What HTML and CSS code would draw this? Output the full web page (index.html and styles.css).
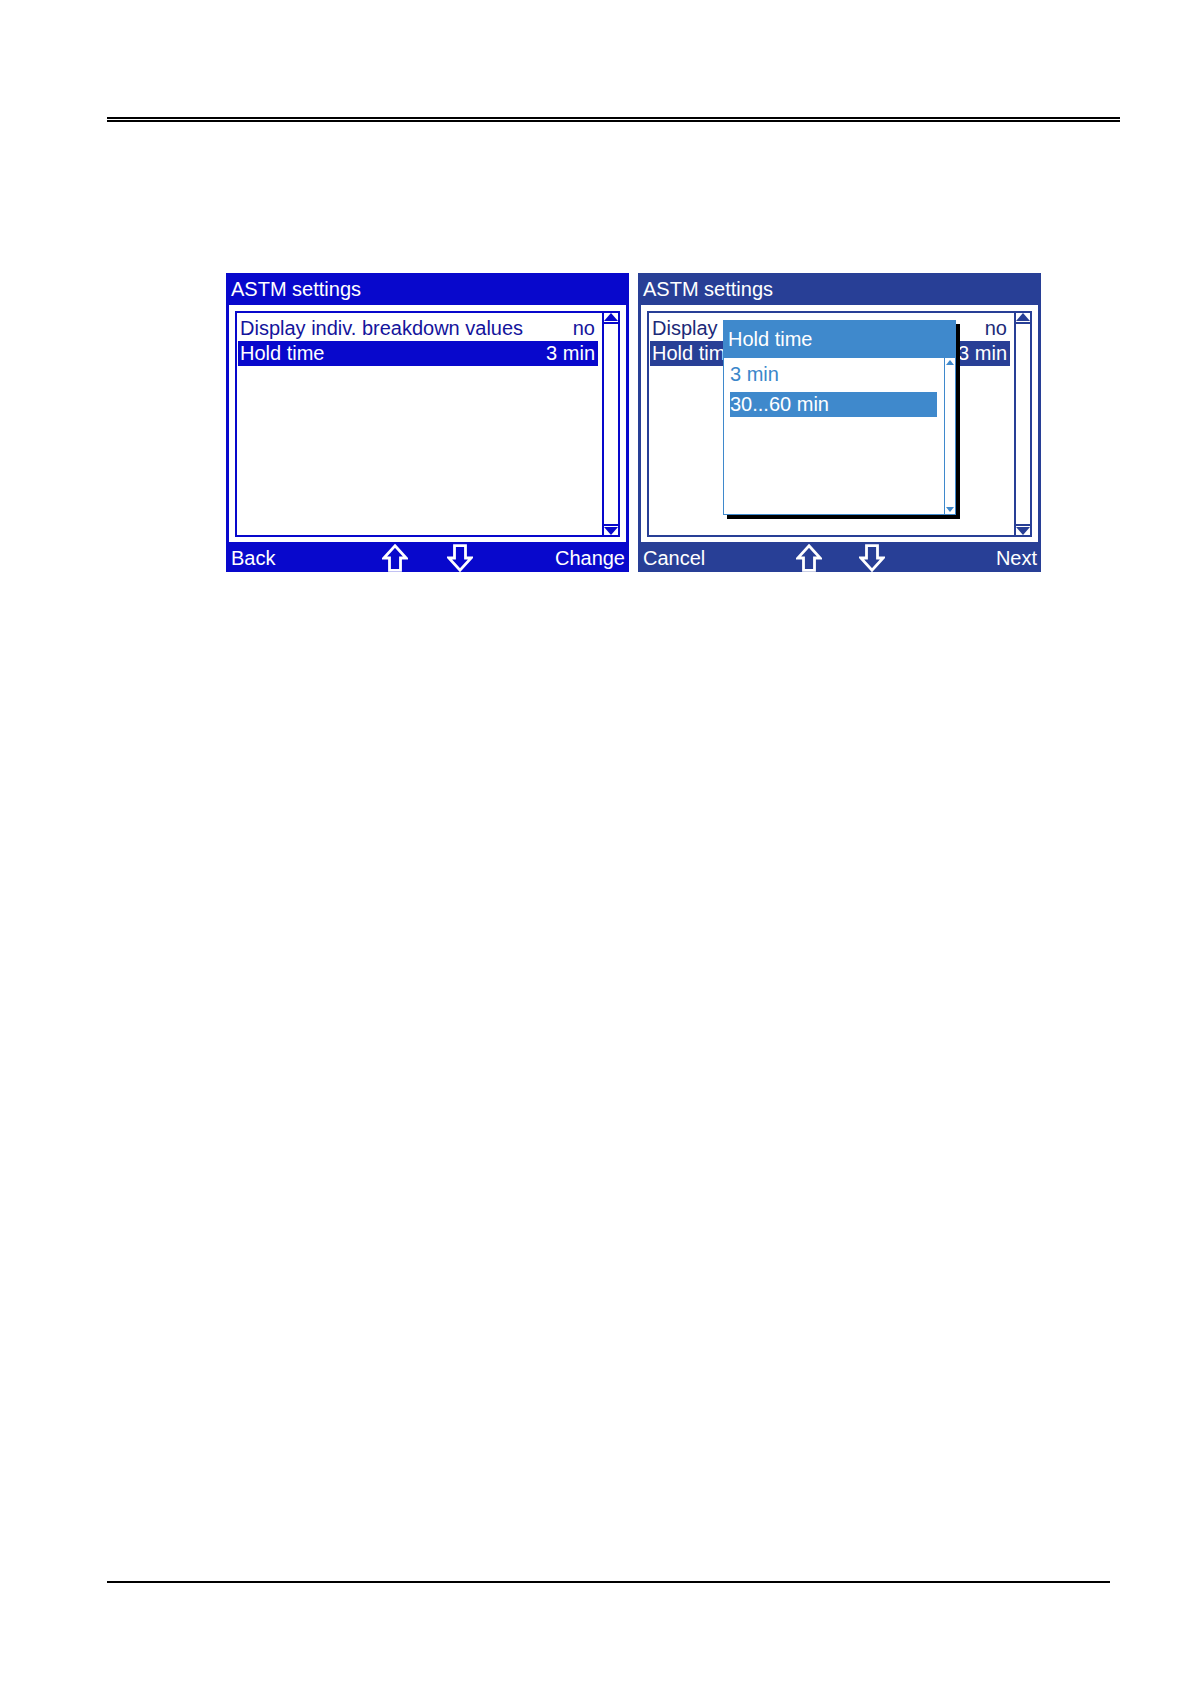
FILE: index.html
```html
<!DOCTYPE html>
<html>
<head>
<meta charset="utf-8">
<link rel="stylesheet" href="styles.css">
</head>
<body>
<div class="page">
  <div class="rule-top"></div>
  <div class="screens">
    <div class="screen s1">
      <div class="title">ASTM settings</div>
      <div class="panel">
        <div class="listbox">
          <div class="rows">
            <div class="row"><span>Display indiv. breakdown values</span><span>no</span></div>
            <div class="row sel"><span>Hold time</span><span>3 min</span></div>
          </div>
          <div class="scroll">
            <div class="sb-up"><svg width="14" height="8" viewBox="0 0 14 8"><polygon points="7,0 14,8 0,8"/></svg></div>
            <div class="sb-track"></div>
            <div class="sb-down"><svg width="14" height="8" viewBox="0 0 14 8"><polygon points="0,0 14,0 7,8"/></svg></div>
          </div>
        </div>
      </div>
      <div class="footer">
        <span class="f-left">Back</span>
        <svg class="arrow" width="26" height="28" viewBox="0 0 26 28"><path d="M13,1.8 L24.2,14 L18.5,14 L18.5,26.3 L7.5,26.3 L7.5,14 L1.8,14 Z"/></svg>
        <svg class="arrow down" width="26" height="28" viewBox="0 0 26 28"><path d="M7.5,1.7 L18.5,1.7 L18.5,14 L24.2,14 L13,26.2 L1.8,14 L7.5,14 Z"/></svg>
        <span class="f-right">Change</span>
      </div>
    </div>
    <div class="screen s2">
      <div class="title">ASTM settings</div>
      <div class="panel">
        <div class="listbox">
          <div class="rows">
            <div class="row"><span>Display indiv. breakdown values</span><span>no</span></div>
            <div class="row sel"><span>Hold time</span><span>3 min</span></div>
          </div>
          <div class="scroll">
            <div class="sb-up"><svg width="14" height="8" viewBox="0 0 14 8"><polygon points="7,0 14,8 0,8"/></svg></div>
            <div class="sb-track"></div>
            <div class="sb-down"><svg width="14" height="8" viewBox="0 0 14 8"><polygon points="0,0 14,0 7,8"/></svg></div>
          </div>
        </div>
      </div>
      <div class="footer">
        <span class="f-left">Cancel</span>
        <svg class="arrow" width="26" height="28" viewBox="0 0 26 28"><path d="M13,1.8 L24.2,14 L18.5,14 L18.5,26.3 L7.5,26.3 L7.5,14 L1.8,14 Z"/></svg>
        <svg class="arrow down" width="26" height="28" viewBox="0 0 26 28"><path d="M7.5,1.7 L18.5,1.7 L18.5,14 L24.2,14 L13,26.2 L1.8,14 L7.5,14 Z"/></svg>
        <span class="f-right">Next</span>
      </div>
      <div class="popup">
        <div class="popup-head">Hold time</div>
        <div class="popup-body">
          <div class="popup-items">
            <div class="pitem">3 min</div>
            <div class="pitem psel">30...60 min</div>
          </div>
          <div class="pscroll">
            <div class="psb-up"><svg width="8" height="5" viewBox="0 0 8 5"><polygon points="4,0 8,5 0,5"/></svg></div>
            <div class="psb-track"></div>
            <div class="psb-down"><svg width="8" height="5" viewBox="0 0 8 5"><polygon points="0,0 8,0 4,5"/></svg></div>
          </div>
        </div>
      </div>
    </div>
  </div>
  <div class="rule-bottom"></div>
</div>
</body>
</html>
```

FILE: styles.css
```css
html, body {
  margin: 0;
  padding: 0;
  background: #ffffff;
}
.page {
  font-family: "Liberation Sans", Arial, sans-serif;
  font-size: 20px;
  overflow: hidden;
  height: 1683px;
}
.rule-top {
  margin: 117px 0 0 107px;
  width: 1013px;
  height: 1px;
  border-top: 2px solid #000;
  border-bottom: 2px solid #000;
}
.screens {
  margin: 151px 0 0 226px;
  display: flex;
  gap: 9px;
}
.screen {
  position: relative;
  width: 403px;
  height: 299px;
  display: flex;
  flex-direction: column;
  color: #fff;
}
.s1 { background: #0808cc; --c: #0808cc; --t: #14149c; }
.s2 { background: #283f96; --c: #283f96; --t: #1c2a78; }

.title {
  height: 32px;
  line-height: 32px;
  padding-left: 5px;
  color: #fff;
}
.panel {
  margin: 0 3px;
  height: 237px;
  box-sizing: border-box;
  background: #fff;
  padding: 6px 6px 5px 6px;
}
.listbox {
  height: 100%;
  box-sizing: border-box;
  border: 2px solid var(--c);
  display: flex;
}
.rows {
  flex: 1;
  padding: 3px 4px 0 1px;
}
.row {
  height: 25px;
  line-height: 25px;
  display: flex;
  justify-content: space-between;
  padding: 0 3px 0 2px;
  color: var(--t);
  white-space: nowrap;
}
.row.sel {
  background: var(--c);
  color: #fff;
}
.scroll {
  width: 14px;
  border-left: 2px solid var(--c);
  display: flex;
  flex-direction: column;
}
.scroll svg { display: block; fill: var(--c); }
.sb-up {
  height: 9px;
  border-bottom: 2px solid var(--c);
}
.sb-track { flex: 1; }
.sb-down {
  height: 9px;
  border-top: 2px solid var(--c);
  display: flex;
  align-items: flex-end;
}
.footer {
  height: 30px;
  display: grid;
  grid-template-columns: 156px 26px 26px 1fr;
  align-items: center;
  line-height: 30px;
}
.f-left { padding-left: 5px; padding-top: 1px; }
.f-right { text-align: right; padding-right: 4px; padding-top: 1px; }
.arrow {
  display: block;
  fill: none;
  stroke: #fff;
  stroke-width: 2.8;
  stroke-linejoin: miter;
}
.arrow.down { margin-left: 39px; }
.s2 .arrow:first-of-type { margin-left: 2px; }
.s2 .footer { grid-template-columns: 156px 28px 26px 1fr; }
.s2 .arrow.down { margin-left: 37px; }

.popup {
  position: absolute;
  left: 85px;
  top: 47px;
  width: 233px;
  height: 195px;
  display: flex;
  flex-direction: column;
  box-shadow: 4px 4px 0 #000;
  background: #fff;
}
.popup-head {
  height: 38px;
  box-sizing: border-box;
  background: #3f89cc;
  color: #fff;
  padding: 7px 0 0 5px;
  line-height: 25px;
}
.popup-body {
  flex: 1;
  display: flex;
  border: 1px solid #3f89cc;
  border-top: none;
}
.popup-items {
  flex: 1;
  padding: 4px 7px 0 6px;
}
.pitem {
  height: 25px;
  line-height: 25px;
  margin-bottom: 5px;
  color: #3a86ca;
}
.pitem.psel {
  background: #3f89cc;
  color: #fff;
}
.pscroll {
  width: 10px;
  border-left: 1px solid #3f89cc;
  display: flex;
  flex-direction: column;
  align-items: center;
}
.pscroll svg { display: block; fill: #3f89cc; }
.psb-up { padding-top: 2px; }
.psb-track { flex: 1; }
.psb-down { padding-bottom: 2px; }

.rule-bottom {
  margin: 1009px 0 0 107px;
  width: 1003px;
  border-top: 2px solid #000;
}
```
